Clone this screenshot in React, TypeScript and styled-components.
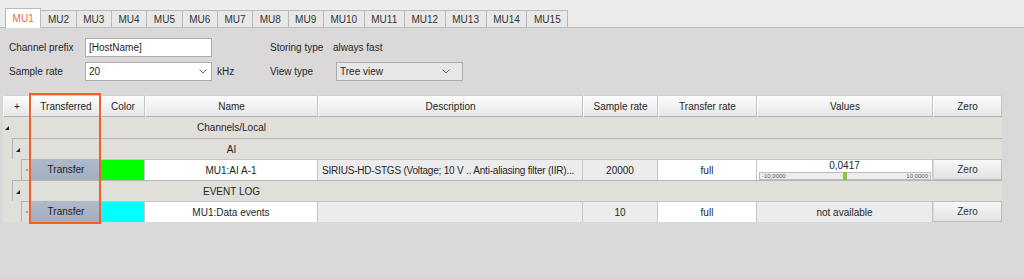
import React from "react";
import styled, { createGlobalStyle } from "styled-components";

const GlobalStyle = createGlobalStyle`
  html, body {
    margin: 0;
    padding: 0;
    background: #dad8d9;
  }
  body {
    font-family: "Liberation Sans", Arial, sans-serif;
    font-size: 10px;
    color: #262626;
  }
  * {
    box-sizing: border-box;
  }
`;

// column widths of the channel table: tree, transferred, color, name, description,
// sample rate, transfer rate, values, zero
const COLS = "28px 70px 44px 173px 265px 75px 99px 176px 69px";

const Screen = styled.div`
  width: 1024px;
  height: 279px;
  overflow: hidden;
  background: #dad8d9;
`;

const TabStrip = styled.div`
  display: flex;
  align-items: flex-end;
  height: 28px;
  padding-left: 5px;
  background: #ececec;
  border-bottom: 1px solid #bcbcbc;
`;

const Tab = styled.div<{ $active?: boolean }>`
  height: ${(p) => (p.$active ? "20px" : "17px")};
  margin-bottom: ${(p) => (p.$active ? "-1px" : "0")};
  margin-right: -1px;
  padding: 0 6.6px;
  display: flex;
  align-items: center;
  border: 1px solid #b9b9b9;
  border-bottom: none;
  background: ${(p) => (p.$active ? "#ffffff" : "#e8e8e8")};
  color: ${(p) => (p.$active ? "#f06a3c" : "#333333")};
  position: relative;
  z-index: ${(p) => (p.$active ? 1 : 0)};
`;

const Panel = styled.div`
  padding-top: 10px;
`;

const SettingsGrid = styled.div`
  display: grid;
  grid-template-columns: 76px 127px 58px 63px 130px;
  grid-auto-rows: 19px;
  row-gap: 5px;
  align-items: center;
  padding-left: 9px;
`;

const Label = styled.span`
  white-space: nowrap;
`;

const Unit = styled.span`
  padding-left: 5px;
`;

const TextBox = styled.div`
  height: 19px;
  display: flex;
  align-items: center;
  padding: 0 3px;
  background: #ffffff;
  border: 1px solid #acacac;
`;

const Combo = styled.div<{ $flat?: boolean }>`
  height: 19px;
  display: flex;
  align-items: center;
  justify-content: space-between;
  padding: 0 ${(p) => (p.$flat ? "12px" : "4px")} 0 3px;
  margin-left: ${(p) => (p.$flat ? "3px" : "0")};
  width: 127px;
  background: ${(p) => (p.$flat ? "#e7e7e7" : "#ffffff")};
  border: 1px solid #acacac;
`;

const Chevron = () => (
  <svg width="8" height="5" viewBox="0 0 8 5">
    <polyline points="0.5,0.5 4,4 7.5,0.5" fill="none" stroke="#6a6a6a" strokeWidth="1" />
  </svg>
);

const TableWrap = styled.div`
  position: relative;
  width: 999px;
  margin: 14px 0 0 3px;
`;

const HeaderRow = styled.div`
  display: grid;
  grid-template-columns: ${COLS};
  height: 22px;
`;

const HeaderCell = styled.div`
  display: flex;
  align-items: center;
  justify-content: center;
  background: linear-gradient(#fdfdfd, #e6e6e6);
  border-top: 1px solid #d2d2d2;
  border-left: 1px solid #ffffff;
  border-right: 1px solid #c4c4c4;
  border-bottom: 1px solid #b2b2b2;
  white-space: nowrap;
`;

const Row = styled.div`
  display: grid;
  grid-template-columns: ${COLS};
  height: 21px;
  background: #e0dfda;
`;

const TreeCell = styled.div<{ $level: number }>`
  display: flex;
  padding-left: ${(p) => p.$level * 9}px;
`;

const Guide = styled.div<{ $lined: boolean }>`
  flex: 1;
  display: flex;
  align-items: center;
  padding-left: ${(p) => (p.$lined ? "3px" : "2px")};
  border-left: ${(p) => (p.$lined ? "1px solid #b4b4b4" : "none")};
  border-top: ${(p) => (p.$lined ? "1px solid #b4b4b4" : "none")};
`;

const Expander = styled.span`
  width: 0;
  height: 0;
  margin-top: 1px;
  border-left: 4px solid transparent;
  border-bottom: 4px solid #1e1e1e;
`;

const Leaf = styled.span`
  width: 2px;
  height: 2px;
  margin-left: 1px;
  background: #a4a4a4;
`;

const GroupCell = styled.div<{ $lined: boolean; $span: string }>`
  grid-column: ${(p) => p.$span};
  display: flex;
  align-items: center;
  justify-content: center;
  border-top: ${(p) => (p.$lined ? "1px solid #b4b4b4" : "none")};
`;

const DataCell = styled.div<{ $bg?: string; $left?: boolean }>`
  display: flex;
  align-items: center;
  justify-content: ${(p) => (p.$left ? "flex-start" : "center")};
  padding: 0 ${(p) => (p.$left ? "4px" : "0")};
  letter-spacing: ${(p) => (p.$left ? "-0.2px" : "normal")};
  background: ${(p) => p.$bg ?? "#ffffff"};
  border-top: 1px solid #c6c6c6;
  border-right: 1px solid #c6c6c6;
  white-space: nowrap;
  overflow: hidden;
`;

const TransferCell = styled.div`
  display: flex;
  align-items: center;
  justify-content: center;
  background: linear-gradient(#afb9cc, #a3aec2);
  color: #222;
`;

const ValueCell = styled.div`
  display: flex;
  flex-direction: column;
  background: #ffffff;
  border-top: 1px solid #c6c6c6;
  border-right: 1px solid #c6c6c6;
`;

const ValueText = styled.div`
  height: 12px;
  line-height: 12px;
  text-align: center;
`;

const Meter = styled.div`
  position: relative;
  height: 8px;
  margin: 0 1px 0 2px;
  padding: 0 2px;
  display: flex;
  align-items: center;
  justify-content: space-between;
  background: #ededed;
  border: 1px solid #bdbdbd;
  font-size: 6px;
  color: #555;
`;

const MeterMark = styled.div`
  position: absolute;
  top: -1px;
  bottom: -1px;
  width: 4px;
  background: #8cc43c;
  transform: translateX(-50%);
`;

const ZeroButton = styled.button`
  margin: 0;
  padding: 0;
  font: inherit;
  color: #333;
  background: linear-gradient(#f8f8f8, #e2e2e2);
  border: 1px solid #bdbdbd;
  border-left-color: #d6d6d6;
`;

const Highlight = styled.div`
  position: absolute;
  left: 26px;
  top: -2px;
  width: 72px;
  height: 131px;
  border: 2px solid #f26122;
  pointer-events: none;
`;

type Channel = {
  name: string;
  color: string;
  description: string;
  sampleRate: string;
  transferRate: string;
  meter?: { value: number; min: number; max: number };
};

type Node =
  | { kind: "group"; level: number; label: string }
  | { kind: "channel"; level: number; channel: Channel };

const tabs = Array.from({ length: 15 }, (_, i) => `MU${i + 1}`);

const headers = [
  "+",
  "Transferred",
  "Color",
  "Name",
  "Description",
  "Sample rate",
  "Transfer rate",
  "Values",
  "Zero",
];

const nodes: Node[] = [
  { kind: "group", level: 0, label: "Channels/Local" },
  { kind: "group", level: 1, label: "AI" },
  {
    kind: "channel",
    level: 2,
    channel: {
      name: "MU1:AI A-1",
      color: "#00ff00",
      description: "SIRIUS-HD-STGS (Voltage; 10 V .. Anti-aliasing filter (IIR)...",
      sampleRate: "20000",
      transferRate: "full",
      meter: { value: 0.0417, min: -10, max: 10 },
    },
  },
  { kind: "group", level: 1, label: "EVENT LOG" },
  {
    kind: "channel",
    level: 2,
    channel: {
      name: "MU1:Data events",
      color: "#00ffff",
      description: "",
      sampleRate: "10",
      transferRate: "full",
    },
  },
];

const fmt = (n: number, digits: number) => n.toFixed(digits).replace(".", ",");

const GroupRow: React.FC<{ level: number; label: string }> = ({ level, label }) => {
  const lined = level > 0;
  return (
    <Row>
      <TreeCell $level={level}>
        <Guide $lined={lined}>
          <Expander />
        </Guide>
      </TreeCell>
      <GroupCell $lined={lined} $span="2 / 4" />
      <GroupCell $lined={lined} $span="4">
        {label}
      </GroupCell>
      <GroupCell $lined={lined} $span="5 / -1" />
    </Row>
  );
};

const ChannelRow: React.FC<{ level: number; channel: Channel }> = ({ level, channel }) => {
  const m = channel.meter;
  return (
    <Row>
      <TreeCell $level={level}>
        <Guide $lined>
          <Leaf />
        </Guide>
      </TreeCell>
      <TransferCell>Transfer</TransferCell>
      <DataCell $bg={channel.color} />
      <DataCell>{channel.name}</DataCell>
      <DataCell $bg="#ececec" $left>
        {channel.description}
      </DataCell>
      <DataCell $bg="#ececec">{channel.sampleRate}</DataCell>
      <DataCell>{channel.transferRate}</DataCell>
      {m ? (
        <ValueCell>
          <ValueText>{fmt(m.value, 4)}</ValueText>
          <Meter>
            <span>{fmt(m.min, 4)}</span>
            <span>{fmt(m.max, 4)}</span>
            <MeterMark style={{ left: `${((m.value - m.min) / (m.max - m.min)) * 100}%` }} />
          </Meter>
        </ValueCell>
      ) : (
        <DataCell $bg="#ececec">not available</DataCell>
      )}
      <ZeroButton>Zero</ZeroButton>
    </Row>
  );
};

const App: React.FC = () => {
  return (
    <Screen>
      <GlobalStyle />
      <TabStrip>
        {tabs.map((t, i) => (
          <Tab key={t} $active={i === 0}>
            {t}
          </Tab>
        ))}
      </TabStrip>

      <Panel>
        <SettingsGrid>
          <Label>Channel prefix</Label>
          <TextBox>[HostName]</TextBox>
          <span />
          <Label>Storing type</Label>
          <Label>always fast</Label>

          <Label>Sample rate</Label>
          <Combo>
            20
            <Chevron />
          </Combo>
          <Unit>kHz</Unit>
          <Label>View type</Label>
          <Combo $flat>
            Tree view
            <Chevron />
          </Combo>
        </SettingsGrid>

        <TableWrap>
          <HeaderRow>
            {headers.map((h) => (
              <HeaderCell key={h}>{h}</HeaderCell>
            ))}
          </HeaderRow>
          {nodes.map((n, i) =>
            n.kind === "group" ? (
              <GroupRow key={i} level={n.level} label={n.label} />
            ) : (
              <ChannelRow key={i} level={n.level} channel={n.channel} />
            )
          )}
          <Highlight />
        </TableWrap>
      </Panel>
    </Screen>
  );
};

export default App;
